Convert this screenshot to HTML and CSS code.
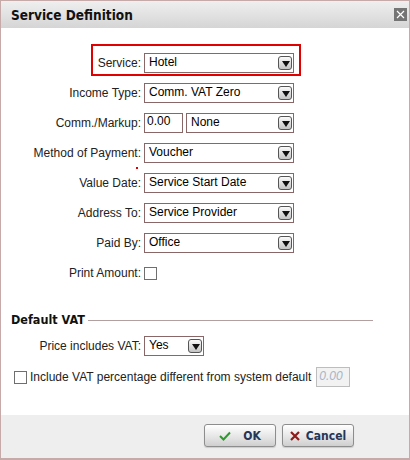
FILE: index.html
```html
<!DOCTYPE html>
<html lang="en">
<head>
  <meta charset="UTF-8">
  <title>Service Definition</title>
  <link rel="stylesheet" href="styles.css">
</head>
<body>
  <div class="dialog">
    <div class="titlebar">
      <span class="title">Service Definition</span>
      <span class="close">
        <svg width="13" height="13" viewBox="0 0 13 13"><path d="M3 3 L10 10 M10 3 L3 10" stroke="#fff" stroke-width="1.2"/></svg>
      </span>
    </div>

    <div class="content">
      <div class="row highlight">
        <span class="label">Service:</span>
        <div class="select wide"><span>Hotel</span><i class="arrow"></i></div>
      </div>
      <div class="row">
        <span class="label">Income Type:</span>
        <div class="select wide"><span>Comm. VAT Zero</span><i class="arrow"></i></div>
      </div>
      <div class="row">
        <span class="label">Comm./Markup:</span>
        <div class="field">0.00</div>
        <div class="select mid"><span>None</span><i class="arrow"></i></div>
      </div>
      <div class="row">
        <span class="label">Method of Payment:</span>
        <div class="select wide"><span>Voucher</span><i class="arrow"></i></div>
      </div>
      <div class="row">
        <span class="marker"></span>
        <span class="label">Value Date:</span>
        <div class="select wide"><span>Service Start Date</span><i class="arrow"></i></div>
      </div>
      <div class="row">
        <span class="label">Address To:</span>
        <div class="select wide"><span>Service Provider</span><i class="arrow"></i></div>
      </div>
      <div class="row">
        <span class="label">Paid By:</span>
        <div class="select wide"><span>Office</span><i class="arrow"></i></div>
      </div>
      <div class="row">
        <span class="label">Print Amount:</span>
        <span class="checkbox"></span>
      </div>

      <div class="section">
        <span>Default VAT</span>
        <span class="rule"></span>
      </div>
      <div class="row">
        <span class="label">Price includes VAT:</span>
        <div class="select small"><span>Yes</span><i class="arrow"></i></div>
      </div>
      <div class="check-row">
        <span class="checkbox"></span>
        <span class="check-text">Include VAT percentage different from system default</span>
        <div class="field disabled">0.00</div>
      </div>
    </div>

    <div class="footer">
      <button class="btn">
        <svg width="12" height="10" viewBox="0 0 12 10"><path d="M1 5 L4.5 8.5 L11 1.5" fill="none" stroke="#2e9a2e" stroke-width="2"/></svg>
        <span class="ok-text">OK</span>
      </button>
      <button class="btn">
        <svg width="10" height="10" viewBox="0 0 10 10"><path d="M1 1 L9 9 M9 1 L1 9" stroke="#8e1a1a" stroke-width="2.2"/></svg>
        <span>Cancel</span>
      </button>
    </div>
  </div>
</body>
</html>
```

FILE: styles.css
```css
body {
  margin: 0;
  background: #fff;
  font-family: "Liberation Sans", Arial, sans-serif;
  font-size: 12px;
  color: #222;
}

.dialog {
  width: 410px;
  height: 460px;
  box-sizing: border-box;
  border: 1px solid #c6a9a9;
  border-bottom-width: 2px;
  display: flex;
  flex-direction: column;
}

.titlebar {
  height: 27px;
  display: flex;
  align-items: center;
  justify-content: space-between;
  padding: 0 2px 0 10px;
  background: linear-gradient(#efefef, #d5d5d5);
}

.title {
  font-family: "DejaVu Sans Condensed", "DejaVu Sans", sans-serif;
  font-weight: bold;
  font-size: 13.5px;
  color: #111;
}

.close {
  width: 13px;
  height: 13px;
  background: #747474;
  display: flex;
  margin-top: -1px;
}

.content {
  flex: 1;
  padding-top: 20px;
}

.row {
  position: relative;
  height: 30px;
  display: flex;
  align-items: center;
  gap: 3px;
}

.label {
  width: 140px;
  text-align: right;
}

.highlight::before {
  content: "";
  position: absolute;
  left: 90px;
  top: -4px;
  width: 206px;
  height: 28px;
  border: 2px solid #e00000;
}

.marker {
  position: absolute;
  left: 135px;
  top: -1px;
  width: 2px;
  height: 2px;
  background: #e00000;
}

.select {
  height: 20px;
  box-sizing: border-box;
  border: 1px solid #8a6767;
  background: #fff;
  display: flex;
  align-items: center;
  justify-content: space-between;
  padding: 0 1px 0 4px;
  color: #000;
}

.select span {
  margin-top: -2px;
}

.wide { width: 150px; }
.mid { width: 108px; }
.small { width: 60px; }

.arrow {
  width: 14px;
  height: 14px;
  box-sizing: border-box;
  border: 1px solid #555;
  border-radius: 3px;
  background: linear-gradient(#fafafa, #c4c4c4);
  position: relative;
}

.arrow::after {
  content: "";
  position: absolute;
  left: 2.5px;
  top: 3.5px;
  border-left: 4px solid transparent;
  border-right: 4px solid transparent;
  border-top: 6px solid #111;
}

.field {
  width: 39px;
  height: 20px;
  box-sizing: border-box;
  border: 1px solid #8a6767;
  padding: 0 2px;
  line-height: 15px;
  color: #000;
}

.checkbox {
  width: 13px;
  height: 13px;
  box-sizing: border-box;
  border: 1px solid #6f6f6f;
  background: #fff;
}

.section {
  display: flex;
  align-items: center;
  gap: 3px;
  padding: 24px 36px 4px 10px;
  font-family: "DejaVu Sans Condensed", "DejaVu Sans", sans-serif;
  font-weight: bold;
  font-size: 12.5px;
  color: #111;
}

.rule {
  flex: 1;
  height: 1px;
  background: #b29f9f;
  margin-top: 1px;
}

.check-row {
  height: 30px;
  margin-top: 1px;
  display: flex;
  align-items: center;
  padding-left: 13px;
}

.check-text {
  margin-left: 3px;
}

.check-row .disabled {
  margin-left: 5px;
  width: 34px;
  border-color: #bdbdbd;
  background: #f2f2f2;
  color: #a9b4c8;
  font-style: italic;
  line-height: 17px;
}

.footer {
  height: 41px;
  background: #eeeeee;
  display: flex;
  align-items: center;
  justify-content: flex-end;
  gap: 6px;
  padding: 0 55px 2px 0;
}

.btn {
  width: 72px;
  height: 23px;
  border: 1px solid #8d8d8d;
  border-radius: 3px;
  background: linear-gradient(#ffffff, #e6e6e6 55%, #cfcfcf);
  box-shadow: 0 1px 1px rgba(0, 0, 0, 0.15);
  display: flex;
  align-items: center;
  justify-content: center;
  gap: 6px;
  font-family: "DejaVu Sans Condensed", "DejaVu Sans", sans-serif;
  font-weight: bold;
  font-size: 12px;
  color: #263556;
  padding: 0;
}

.ok-text {
  margin-left: 6px;
}
```
